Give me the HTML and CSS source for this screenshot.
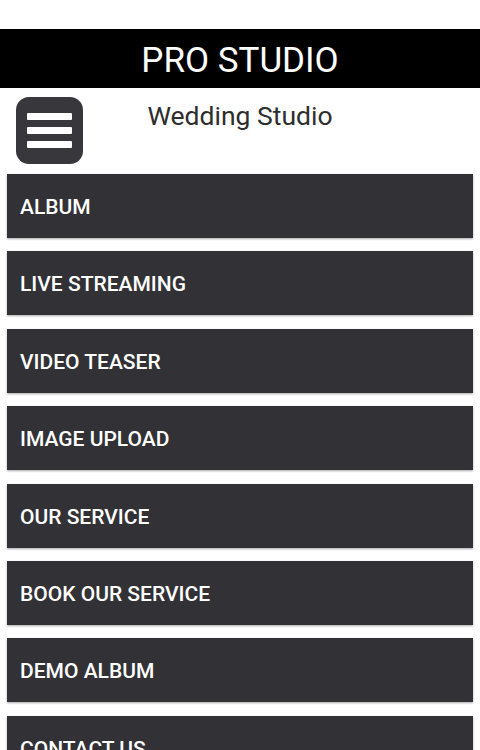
FILE: index.html
```html
<!DOCTYPE html>
<html>
<head>
<meta charset="utf-8">
<link rel="stylesheet" href="styles.css">
</head>
<body>
<div class="top-space"></div>
<header class="title-bar">PRO STUDIO</header>
<div class="sub-bar">
  <div class="menu-btn"><span></span><span></span><span></span></div>
  <div class="subtitle">Wedding Studio</div>
</div>
<nav class="menu">
  <div class="item">ALBUM</div>
  <div class="item">LIVE STREAMING</div>
  <div class="item">VIDEO TEASER</div>
  <div class="item">IMAGE UPLOAD</div>
  <div class="item">OUR SERVICE</div>
  <div class="item">BOOK OUR SERVICE</div>
  <div class="item">DEMO ALBUM</div>
  <div class="item">CONTACT US</div>
</nav>
</body>
</html>
```
FILE: styles.css
```css
html, body {
  margin: 0;
  padding: 0;
  background: #ffffff;
  font-family: Roboto, "Liberation Sans", sans-serif;
  overflow: hidden;
  height: 750px;
}
.top-space {
  height: 29px;
}
.title-bar {
  height: 59px;
  box-sizing: border-box;
  padding-top: 3px;
  background: #000000;
  color: #ffffff;
  font-size: 35px;
  display: flex;
  align-items: center;
  justify-content: center;
}
.sub-bar {
  position: relative;
  height: 86px;
}
.subtitle {
  text-align: center;
  font-size: 26.5px;
  color: #2e2e2e;
  padding-top: 12px;
}
.menu-btn {
  position: absolute;
  left: 16px;
  top: 9px;
  width: 67px;
  height: 67px;
  border-radius: 13px;
  background: #38373c;
  box-sizing: border-box;
  padding: 16px 11px 0;
  display: flex;
  flex-direction: column;
  gap: 7px;
}
.menu-btn span {
  display: block;
  height: 7px;
  background: #ffffff;
  border-radius: 1px;
}
.menu {
  display: flex;
  flex-direction: column;
  gap: 13.4px;
  padding: 0 7px;
}
.item {
  height: 64px;
  flex: 0 0 64px;
  box-sizing: border-box;
  padding-top: 2px;
  background: #323136;
  color: #ffffff;
  font-size: 21px;
  font-weight: 500;
  display: flex;
  align-items: center;
  padding-left: 13px;
  box-shadow: 0 1px 2px rgba(0,0,0,0.35);
}
```
